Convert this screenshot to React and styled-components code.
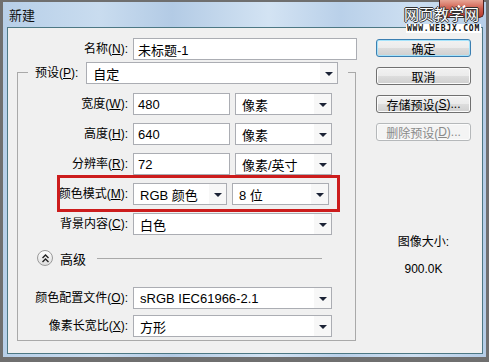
import React from 'react';
import styled, { createGlobalStyle } from 'styled-components';

const GlobalStyle = createGlobalStyle`
  html, body {
    margin: 0;
    padding: 0;
  }
  body {
    width: 489px;
    height: 362px;
    overflow: hidden;
    background: #6f6f6f;
    font-family: "Liberation Sans", "Noto Sans CJK SC", sans-serif;
    font-size: 12px;
    color: #000;
  }
`;

const Window = styled.div`
  position: relative;
  margin: 2px 3px 0 3px;
  height: 355px;
  display: flex;
  flex-direction: column;
  background: linear-gradient(90deg, #b7cfe8 0%, #c9dcef 20%, #b3cbe5 35%, #d3e3f3 55%, #b9d0e9 70%, #cddff1 85%, #b5cde7 100%);
`;

const TitleBar = styled.div`
  height: 25px;
  display: flex;
  align-items: center;
  padding-left: 6px;
  font-size: 13px;
  color: #111;
`;

const CloseButton = styled.div`
  position: absolute;
  top: -2px;
  right: 2px;
  width: 45px;
  height: 18px;
  box-sizing: border-box;
  border: 1px solid #4a2020;
  border-top: none;
  border-radius: 0 0 5px 5px;
  background: linear-gradient(#e7a595, #cf5e4e 50%, #b83a2c);
  display: flex;
  align-items: center;
  justify-content: center;
`;

const Watermark = styled.div`
  position: absolute;
  top: 2px;
  right: 5px;
  display: flex;
  flex-direction: column;
  align-items: flex-end;
  z-index: 2;
`;

const WatermarkTitle = styled.div`
  font-family: "Noto Sans CJK SC", sans-serif;
  font-size: 15px;
  line-height: 20px;
  color: #fff;
  margin-right: 2px;
  text-shadow: 1px 0 0 #333, -1px 0 0 #333, 0 1px 0 #333, 0 -1px 0 #333;
`;

const WatermarkUrl = styled.div`
  font-family: "DejaVu Sans Mono", monospace;
  font-weight: bold;
  font-size: 8px;
  line-height: 9px;
  letter-spacing: 0.8px;
  background: #fff;
  color: #111;
  padding: 0 1px;
`;

const Body = styled.div`
  flex: 1;
  margin: 0 3px 3px 4px;
  border: 1px solid #4d7884;
  background: #f0f0f0;
  display: flex;
  gap: 19px;
  padding: 10px 0 0 9px;
`;

const MainColumn = styled.div`
  width: 340px;
  display: flex;
  flex-direction: column;
`;

const Label = styled.span`
  text-align: right;
  white-space: nowrap;
  line-height: 16px;
`;

const NameRow = styled.div`
  display: grid;
  grid-template-columns: 111px auto;
  column-gap: 5px;
  align-items: center;
`;

const TextBox = styled.div`
  width: ${p => p.$w}px;
  height: 22px;
  box-sizing: border-box;
  border: 1px solid #abadb3;
  background: #fff;
  padding-left: 4px;
  display: flex;
  align-items: center;
  font-size: 13px;
`;

const ComboBox = styled.div`
  width: ${p => p.$w}px;
  height: 22px;
  box-sizing: border-box;
  border: 1px solid #abadb3;
  background: #fff;
  display: flex;
  align-items: center;
`;

const ComboText = styled.span`
  flex: 1;
  padding-left: 6px;
  font-size: 13px;
  white-space: nowrap;
  overflow: hidden;
`;

const ComboArrow = styled.span`
  width: 17px;
  align-self: stretch;
  display: flex;
  align-items: center;
  justify-content: center;
  background: #f7f7f7;
  &::after {
    content: '';
    border-left: 4px solid transparent;
    border-right: 4px solid transparent;
    border-top: 4px solid #1b2235;
    margin-top: 1px;
  }
`;

const Group = styled.fieldset`
  margin: 0;
  width: 339px;
  box-sizing: border-box;
  border: 1px solid #a9a9a9;
  padding: 9px 0 3px 0;
  min-width: 0;
`;

const Legend = styled.legend`
  margin-left: 10px;
  padding: 2px 10px 0 7px;
`;

const LegendInner = styled.div`
  display: flex;
  align-items: center;
  gap: 8px;
`;

const FieldGrid = styled.div`
  display: grid;
  grid-template-columns: 110px auto;
  column-gap: 5px;
  row-gap: ${p => p.$gap}px;
  align-items: center;
  margin-top: ${p => p.$top || 0}px;
`;

const Pair = styled.div`
  position: relative;
  display: flex;
  gap: 5px;
`;

const Highlight = styled.div`
  position: absolute;
  left: -76px;
  top: -8px;
  width: 283px;
  height: 37px;
  box-sizing: border-box;
  border: 3px solid #cc1c1c;
  pointer-events: none;
`;

const AdvancedRow = styled.div`
  margin-top: 15px;
  padding-left: 19px;
  padding-right: 33px;
  height: 16px;
  display: flex;
  align-items: center;
  gap: 7px;
`;

const ToggleCircle = styled.span`
  width: 16px;
  height: 16px;
  box-sizing: border-box;
  border-radius: 50%;
  border: 1px solid #9a9a9a;
  background: linear-gradient(#ffffff, #dedede);
  display: flex;
  align-items: center;
  justify-content: center;
`;

const AdvancedText = styled.span`
  font-size: 13px;
`;

const Rule = styled.span`
  flex: 1;
  height: 1px;
  background: #a9a9a9;
  margin-left: 4px;
`;

const SideColumn = styled.div`
  width: 95px;
  display: flex;
  flex-direction: column;
  gap: 10px;
  padding-top: 1px;
`;

const Button = styled.div`
  height: 18px;
  box-sizing: border-box;
  border: 1px solid ${p => (p.$primary ? '#3c7fb1' : p.$disabled ? '#b5b8ba' : '#707070')};
  border-radius: 3px;
  background: ${p => (p.$disabled
    ? '#f4f4f4'
    : 'linear-gradient(#f2f2f2 0%, #ebebeb 50%, #dddddd 51%, #cfcfcf 100%)')};
  box-shadow: ${p => (p.$primary ? 'inset 0 0 0 1px #a5e3fb' : 'inset 0 0 0 1px #fbfbfb')};
  color: ${p => (p.$disabled ? '#8a8a8a' : '#000')};
  display: flex;
  align-items: center;
  justify-content: center;
  font-size: 12px;
  white-space: nowrap;
`;

const SizeInfo = styled.div`
  margin-top: 83px;
  display: flex;
  flex-direction: column;
  align-items: center;
  gap: 11px;
  line-height: 16px;
`;

const Chevrons = () => (
  <svg width="9" height="9" viewBox="0 0 9 9">
    <path d="M1.5 4 L4.5 1 L7.5 4 M1.5 8 L4.5 5 L7.5 8" fill="none" stroke="#222" strokeWidth="1.4" />
  </svg>
);

const CloseGlyph = () => (
  <svg width="9" height="8" viewBox="0 0 9 8">
    <path d="M1 0.5 L8 7.5 M8 0.5 L1 7.5" stroke="#fff" strokeWidth="2" />
  </svg>
);

const Combo = ({ w, children }) => (
  <ComboBox $w={w}>
    <ComboText>{children}</ComboText>
    <ComboArrow />
  </ComboBox>
);

export default function App() {
  return (
    <>
      <GlobalStyle />
      <Window>
        <TitleBar>新建</TitleBar>
        <CloseButton><CloseGlyph /></CloseButton>
        <Watermark>
          <WatermarkTitle>网页教学网</WatermarkTitle>
          <WatermarkUrl>WWW.WEBJX.COM</WatermarkUrl>
        </Watermark>
        <Body>
          <MainColumn>
            <NameRow>
              <Label>名称(<u>N</u>):</Label>
              <TextBox $w={224}>未标题-1</TextBox>
            </NameRow>
            <Group>
              <Legend>
                <LegendInner>
                  <Label>预设(<u>P</u>):</Label>
                  <Combo w={252}>自定</Combo>
                </LegendInner>
              </Legend>
              <FieldGrid $gap={8}>
                <Label>宽度(<u>W</u>):</Label>
                <Pair>
                  <TextBox $w={97}>480</TextBox>
                  <Combo w={97}>像素</Combo>
                </Pair>
                <Label>高度(<u>H</u>):</Label>
                <Pair>
                  <TextBox $w={97}>640</TextBox>
                  <Combo w={97}>像素</Combo>
                </Pair>
                <Label>分辨率(<u>R</u>):</Label>
                <Pair>
                  <TextBox $w={97}>72</TextBox>
                  <Combo w={97}>像素/英寸</Combo>
                </Pair>
                <Label>颜色模式(<u>M</u>):</Label>
                <Pair>
                  <Combo w={94}>RGB 颜色</Combo>
                  <Combo w={97}>8 位</Combo>
                  <Highlight />
                </Pair>
                <Label>背景内容(<u>C</u>):</Label>
                <Combo w={199}>白色</Combo>
              </FieldGrid>
              <AdvancedRow>
                <ToggleCircle><Chevrons /></ToggleCircle>
                <AdvancedText>高级</AdvancedText>
                <Rule />
              </AdvancedRow>
              <FieldGrid $gap={6} $top={21}>
                <Label>颜色配置文件(<u>O</u>):</Label>
                <Combo w={199}>sRGB IEC61966-2.1</Combo>
                <Label>像素长宽比(<u>X</u>):</Label>
                <Combo w={199}>方形</Combo>
              </FieldGrid>
            </Group>
          </MainColumn>
          <SideColumn>
            <Button $primary>确定</Button>
            <Button>取消</Button>
            <Button>存储预设(<u>S</u>)...</Button>
            <Button $disabled>删除预设(<u>D</u>)...</Button>
            <SizeInfo>
              <span>图像大小:</span>
              <span>900.0K</span>
            </SizeInfo>
          </SideColumn>
        </Body>
      </Window>
    </>
  );
}
